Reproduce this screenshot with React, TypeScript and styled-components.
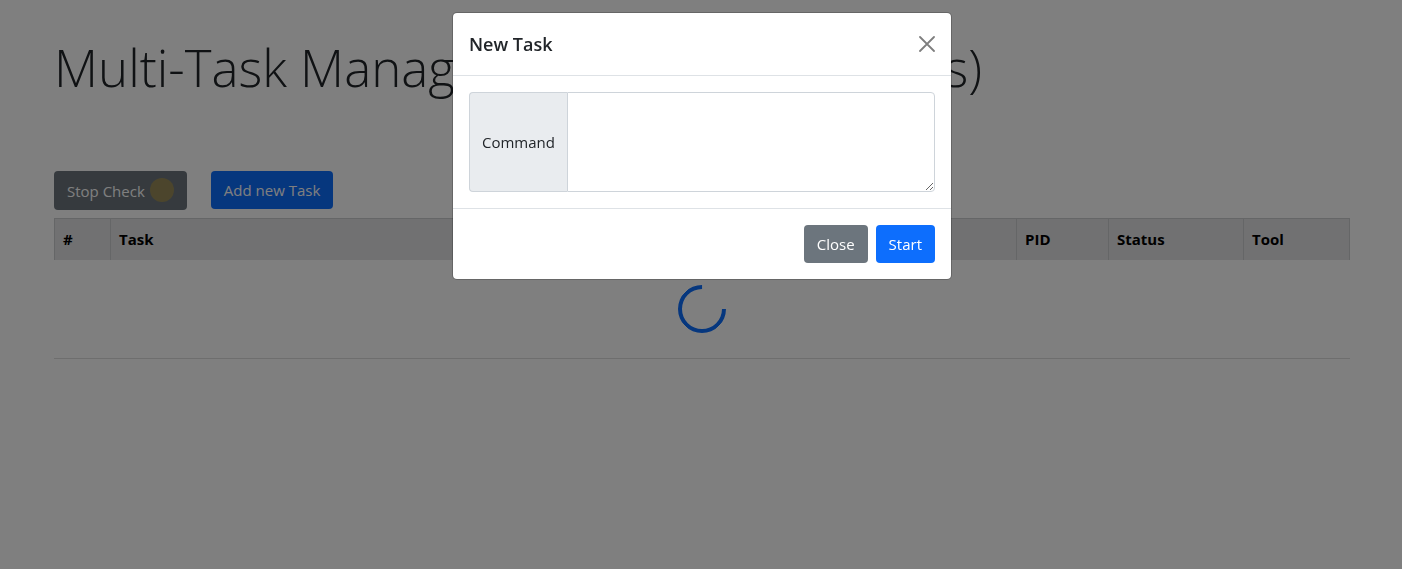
import React from "react";
import styled, { createGlobalStyle } from "styled-components";

const GlobalStyle = createGlobalStyle`
  *, *::before, *::after { box-sizing: border-box; }
  body {
    margin: 0;
    background: #fff;
    color: #212529;
    font-family: "Open Sans", "Noto Sans", sans-serif;
    font-size: 15px;
    line-height: 24px;
  }
`;

const Page = styled.main`
  padding: 30px 52px 0 54px;
`;

const Title = styled.h1`
  margin: 0 0 66px;
  font-size: 51px;
  font-weight: 300;
  line-height: 75px;
  white-space: nowrap;
`;

const Toolbar = styled.div`
  display: flex;
  align-items: flex-start;
  gap: 24px;
  margin-bottom: 8px;
`;

const Button = styled.button<{ $variant: "primary" | "secondary" }>`
  display: inline-flex;
  align-items: center;
  gap: 5px;
  min-height: 38px;
  padding: 6px 12px;
  border: 1px solid transparent;
  border-radius: 4px;
  background: ${(p) => (p.$variant === "primary" ? "#0d6efd" : "#6c757d")};
  background-clip: border-box;
  color: #fff;
  font: inherit;
  cursor: pointer;
`;

const Pulse = styled.span`
  width: 24px;
  height: 24px;
  margin-bottom: 1px;
  border-radius: 50%;
  background: #ffc107;
  opacity: 0.3;
`;

const TaskTable = styled.table`
  width: 100%;
  table-layout: fixed;
  border-collapse: collapse;
  background: #e2e3e5;
  color: #000;
`;

const HeadCell = styled.th<{ $width?: number }>`
  width: ${(p) => (p.$width ? `${p.$width}px` : "auto")};
  padding: 8px 8px 9px;
  border: 1px solid #cbccce;
  border-bottom: 0;
  font-weight: 700;
  text-align: left;
`;

const Loading = styled.div`
  display: flex;
  justify-content: center;
  padding: 25px 0;
  border-bottom: 1px solid #dcdcdd;
`;

const Spinner = styled.div`
  width: 48px;
  height: 48px;
  border: 4px solid #0d6efd;
  border-right-color: transparent;
  border-radius: 50%;
  transform: rotate(-45deg);
`;

const Backdrop = styled.div`
  position: fixed;
  inset: 0;
  display: flex;
  justify-content: center;
  align-items: flex-start;
  padding: 12px 0 0 2px;
  background: rgba(0, 0, 0, 0.5);
`;

const Dialog = styled.section`
  width: 100%;
  max-width: 500px;
  border: 1px solid rgba(0, 0, 0, 0.2);
  border-radius: 5px;
  background: #fff;
  background-clip: padding-box;
`;

const DialogHeader = styled.header`
  display: flex;
  align-items: center;
  justify-content: space-between;
  padding: 16px;
  border-bottom: 1px solid #dee2e6;
`;

const DialogTitle = styled.h2`
  margin: 0;
  font-size: 18px;
  font-weight: 600;
  line-height: 30px;
`;

const CloseButton = styled.button`
  display: flex;
  padding: 0;
  border: 0;
  background: none;
  color: #000;
  opacity: 0.5;
  cursor: pointer;
`;

const DialogBody = styled.div`
  padding: 16px;
`;

const InputGroup = styled.div`
  display: flex;
  height: 100px;
`;

const InputLabel = styled.label`
  display: flex;
  align-items: center;
  padding: 0 12px;
  border: 1px solid #ced4da;
  border-right: 0;
  border-radius: 4px 0 0 4px;
  background: #e9ecef;
`;

const CommandInput = styled.textarea`
  flex: 1;
  min-width: 0;
  padding: 6px 12px;
  border: 1px solid #ced4da;
  border-radius: 0 4px 4px 0;
  outline: 0;
  background: #fff;
  font: inherit;
  resize: vertical;
`;

const DialogFooter = styled.footer`
  display: flex;
  justify-content: flex-end;
  gap: 8px;
  padding: 16px;
  border-top: 1px solid #dee2e6;
`;

const columns: { label: string; width?: number }[] = [
  { label: "#", width: 56 },
  { label: "Task" },
  { label: "PID", width: 92 },
  { label: "Status", width: 135 },
  { label: "Tool", width: 106 },
];

export default function App() {
  return (
    <>
      <GlobalStyle />
      <Page>
        <Title>Multi-Task Manager (Background Events)</Title>
        <Toolbar>
          <Button type="button" $variant="secondary">
            Stop Check <Pulse />
          </Button>
          <Button type="button" $variant="primary">
            Add new Task
          </Button>
        </Toolbar>
        <TaskTable>
          <thead>
            <tr>
              {columns.map((c) => (
                <HeadCell key={c.label} scope="col" $width={c.width}>
                  {c.label}
                </HeadCell>
              ))}
            </tr>
          </thead>
        </TaskTable>
        <Loading>
          <Spinner role="status" aria-label="Loading" />
        </Loading>
      </Page>
      <Backdrop>
        <Dialog role="dialog" aria-modal="true" aria-labelledby="dialog-title">
          <DialogHeader>
            <DialogTitle id="dialog-title">New Task</DialogTitle>
            <CloseButton type="button" aria-label="Close">
              <svg width="16" height="16" viewBox="0 0 16 16" fill="none" stroke="currentColor" strokeWidth="1.8" strokeLinecap="round">
                <path d="M1 1l14 14M15 1L1 15" />
              </svg>
            </CloseButton>
          </DialogHeader>
          <DialogBody>
            <InputGroup>
              <InputLabel htmlFor="command">Command</InputLabel>
              <CommandInput id="command" />
            </InputGroup>
          </DialogBody>
          <DialogFooter>
            <Button type="button" $variant="secondary">
              Close
            </Button>
            <Button type="button" $variant="primary">
              Start
            </Button>
          </DialogFooter>
        </Dialog>
      </Backdrop>
    </>
  );
}
